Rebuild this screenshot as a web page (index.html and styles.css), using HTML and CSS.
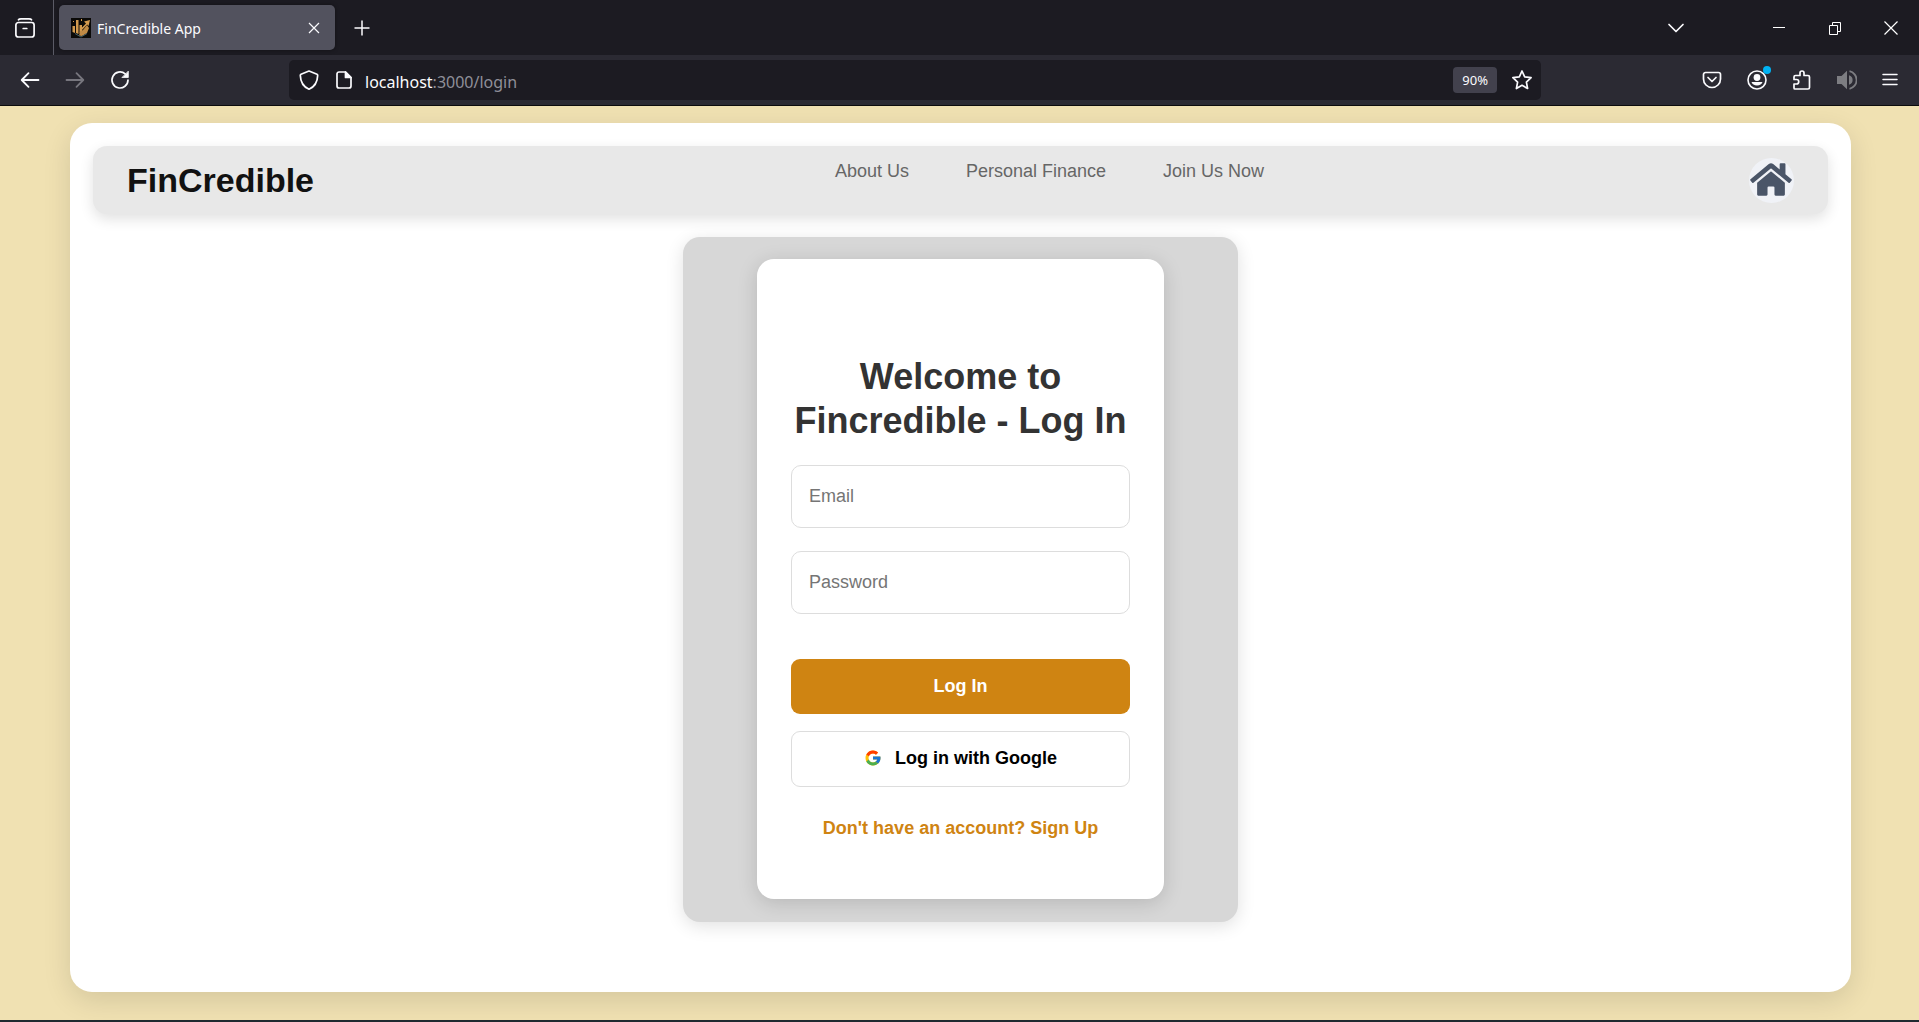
FILE: index.html
```html
<!DOCTYPE html>
<html lang="en">
<head>
<meta charset="utf-8">
<meta name="viewport" content="width=device-width, initial-scale=1">
<title>FinCredible App</title>
<link rel="stylesheet" href="styles.css">
</head>
<body>
<div class="browser">
  <div class="tab-bar">
    <div class="tab-side">
      <button class="icon-button" type="button" aria-label="Recent browsing">
        <svg width="20" height="20" viewBox="0 0 20 20" fill="none" stroke="#fbfbfe" stroke-width="1.700" stroke-linecap="round"><path d="M3.500 1.800C4 1 5 .9 6 .9h8c1 0 2 .1 2.500.9"/><rect x=".9" y="4.500" width="18.200" height="14.500" rx="2.500"/><path d="M8.200 10.500h3.600"/></svg>
      </button>
    </div>
    <div class="tab">
      <svg class="tab-logo" width="20" height="20" viewBox="0 0 20 20"><rect width="20" height="20" fill="#0b0a08"/><g fill="#d39a4e"><path d="M1.500 8h2.500v7l-2.500-1zM5 2h2.500v14L5 15zM8.500 7h2.500v8H8.500z"/><path d="M13 3.500l6-1.500-1.500 6-1.300-1.500L11 12l-1-1.500 5-5z"/><path d="M8 17.500l1-4 3-1.500 4-5 2 3-2 5-5 3z" fill="#c08a45"/><path d="M2 3h1v1H2zM10 1h1v2h-1z"/></g><path d="M4 15.500l6 3.500 6-3.500" stroke="#466068" fill="none"/></svg>
      <span class="tab-title">FinCredible App</span>
      <button class="icon-button tab-close" type="button" aria-label="Close tab">
        <svg width="12" height="12" viewBox="0 0 12 12" stroke="#fbfbfe" stroke-width="1.200"><path d="M1 1l10 10M11 1L1 11"/></svg>
      </button>
    </div>
    <button class="icon-button new-tab" type="button" aria-label="New tab">
      <svg width="16" height="16" viewBox="0 0 16 16" stroke="#fbfbfe" stroke-width="1.500"><path d="M8 .5v15M.5 8h15"/></svg>
    </button>
    <div class="window-controls">
      <button class="icon-button list-tabs" type="button" aria-label="List all tabs">
        <svg width="18" height="18" viewBox="0 0 18 18" fill="none" stroke="#fbfbfe" stroke-width="1.700" stroke-linecap="round" stroke-linejoin="round"><path d="M2 5.500l7 7 7-7"/></svg>
      </button>
      <button class="icon-button window-button" type="button" aria-label="Minimize">
        <svg width="12" height="14" viewBox="0 0 12 14" stroke="#fff"><path d="M0 6.500h12"/></svg>
      </button>
      <button class="icon-button window-button" type="button" aria-label="Restore">
        <svg width="14" height="14" viewBox="0 0 14 14" fill="none" stroke="#fff"><path d="M1.500 4.500h8v9h-8zM4.500 4.500v-3h8v9h-3"/></svg>
      </button>
      <button class="icon-button window-button" type="button" aria-label="Close window">
        <svg width="14" height="14" viewBox="0 0 14 14" stroke="#fff" stroke-width="1.200"><path d="M.5.5l13 13M13.500.5l-13 13"/></svg>
      </button>
    </div>
  </div>

  <div class="toolbar">
    <div class="history-buttons">
      <button class="icon-button" type="button" aria-label="Back">
        <svg width="20" height="18" viewBox="0 0 20 18" fill="none" stroke="#fbfbfe" stroke-width="1.800" stroke-linecap="round" stroke-linejoin="round"><path d="M18.500 9H2M8.500 2.200L1.700 9l6.800 6.800"/></svg>
      </button>
      <button class="icon-button" type="button" aria-label="Forward" disabled>
        <svg width="20" height="18" viewBox="0 0 20 18" fill="none" stroke="#77767e" stroke-width="1.800" stroke-linecap="round" stroke-linejoin="round"><path d="M1.500 9H18M11.500 2.200L18.300 9l-6.800 6.800"/></svg>
      </button>
      <button class="icon-button" type="button" aria-label="Reload">
        <svg width="20" height="20" viewBox="0 0 20 20" fill="none" stroke="#fbfbfe" stroke-width="1.700" stroke-linecap="round"><path d="M18 10a8 8 0 1 1-2.800-6.100"/><path d="M18.300 1.500v6h-6z" fill="#fbfbfe" stroke-width=".8" stroke-linejoin="round"/></svg>
      </button>
    </div>
    <div class="address-bar">
      <svg width="20" height="20" viewBox="0 0 20 20" fill="none" stroke="#fbfbfe" stroke-width="1.700" stroke-linejoin="round"><path d="M10 1l8 3.200c.6.300.7.600.7 1.200C18.500 11 16.500 16.500 10 19.200 3.500 16.500 1.500 11 1.300 5.400c0-.6.100-.9.700-1.200z"/></svg>
      <svg class="page-icon" width="16" height="18" viewBox="0 0 16 18" fill="none" stroke="#fbfbfe" stroke-width="1.700" stroke-linejoin="round"><path d="M9.500 1H3a2 2 0 0 0-2 2v12a2 2 0 0 0 2 2h10a2 2 0 0 0 2-2V6.500z"/><path d="M9.500 1v5.500H15z" fill="#fbfbfe"/></svg>
      <div class="address" role="textbox" aria-label="Address"><span class="address-host">localhost</span>:3000/login</div>
      <button class="zoom-level" type="button">90%</button>
      <button class="icon-button" type="button" aria-label="Bookmark this page">
        <svg width="22" height="22" viewBox="0 0 22 22" fill="none" stroke="#fbfbfe" stroke-width="1.700" stroke-linejoin="round"><path d="M11 2l2.700 5.900 6.400.8-4.700 4.400 1.200 6.400L11 16.300l-5.600 3.200 1.200-6.400L1.900 8.700l6.400-.8z"/></svg>
      </button>
    </div>
    <div class="tools">
      <button class="icon-button" type="button" aria-label="Save to Pocket">
        <svg width="20" height="20" viewBox="0 0 20 20" fill="none" stroke="#fbfbfe" stroke-width="1.700" stroke-linecap="round" stroke-linejoin="round"><path d="M3.500 2.500h13a2 2 0 0 1 2 2V9a8.500 8.500 0 0 1-17 0V4.500a2 2 0 0 1 2-2z"/><path d="M6 7.500l4 4 4-4"/></svg>
      </button>
      <button class="icon-button account" type="button" aria-label="Account">
        <svg width="20" height="20" viewBox="0 0 20 20" fill="none" stroke="#fbfbfe" stroke-width="1.600"><circle cx="10" cy="10" r="9"/><circle cx="10" cy="7.500" r="3.400" fill="#fbfbfe" stroke="none"/><path d="M4.500 12h11c-.6 2.200-2.800 3.600-5.500 3.600S5.100 14.200 4.500 12z" fill="#fbfbfe" stroke="none"/></svg>
        <span class="account-badge"></span>
      </button>
      <button class="icon-button" type="button" aria-label="Extensions">
        <svg width="20" height="20" viewBox="0 0 20 20" fill="none" stroke="#fbfbfe" stroke-width="1.700" stroke-linejoin="round"><path d="M3 19h13a1.500 1.500 0 0 0 1.500-1.500V7A1.500 1.500 0 0 0 16 5.500h-4V3a2 2 0 0 0-4 0v2.500H3.500A1.500 1.500 0 0 0 2 7v2.500h2.500a2 2 0 0 1 0 4.500H2v4a1 1 0 0 0 1 1z"/></svg>
      </button>
      <button class="icon-button" type="button" aria-label="Sound">
        <svg width="20" height="20" viewBox="0 0 20 20" fill="none" stroke="#7d7d82" stroke-width="1.800"><path d="M0 6h4.500L10 .8v18.400L4.500 14H0z" fill="#7d7d82" stroke="none"/><path d="M12 5.200a5 5 0 0 1 0 9.600z" fill="#7d7d82" stroke="none"/><path d="M12.500 1.200a9 9 0 0 1 0 17.600"/></svg>
      </button>
      <button class="icon-button" type="button" aria-label="Menu">
        <svg width="16" height="16" viewBox="0 0 16 16" stroke="#fbfbfe" stroke-width="1.500" stroke-linecap="round"><path d="M1 2.500h14M1 7.500h14M1 12.500h14"/></svg>
      </button>
    </div>
  </div>
</div>

<div class="page">
  <div class="sheet">
    <header class="site-header">
      <div class="brand">FinCredible</div>
      <nav>
        <ul class="nav-links">
          <li><a href="#about">About Us</a></li>
          <li><a href="#finance">Personal Finance</a></li>
          <li><a href="#join">Join Us Now</a></li>
        </ul>
      </nav>
      <a class="home-link" href="#home" aria-label="Home">
        <svg width="42" height="37" viewBox="0 0 576 512" fill="#4a5568"><path d="M280.370 148.260L96 300.110V464a16 16 0 0 0 16 16l112.060-.29a16 16 0 0 0 15.920-16V368a16 16 0 0 1 16-16h64a16 16 0 0 1 16 16v95.640a16 16 0 0 0 16 16.050L464 480a16 16 0 0 0 16-16V300L295.670 148.260a12.190 12.190 0 0 0-15.300 0zM571.600 251.470L488 182.560V44.050a12 12 0 0 0-12-12h-56a12 12 0 0 0-12 12v72.610L318.470 43a48 48 0 0 0-61 0L4.340 251.470a12 12 0 0 0-1.600 16.900l25.500 31A12 12 0 0 0 45.150 301l235.220-193.740a12.190 12.190 0 0 1 15.300 0L530.900 301a12 12 0 0 0 16.900-1.600l25.500-31a12 12 0 0 0-1.700-16.930z"/></svg>
      </a>
    </header>

    <main class="login-panel">
      <form class="login-card">
        <h1 class="login-title">Welcome to Fincredible - Log In</h1>
        <input class="field" type="email" aria-label="Email" placeholder="Email">
        <input class="field" type="password" aria-label="Password" placeholder="Password">
        <div class="actions">
          <button class="button button-primary" type="submit">Log In</button>
          <button class="button button-google" type="button">
            <svg width="18" height="18" viewBox="0 0 48 48"><path fill="#FFC107" d="M43.611 20.083H42V20H24v8h11.303c-1.649 4.657-6.080 8-11.303 8-6.627 0-12-5.373-12-12s5.373-12 12-12c3.059 0 5.842 1.154 7.961 3.039l5.657-5.657C34.046 6.053 29.268 4 24 4 12.955 4 4 12.955 4 24s8.955 20 20 20 20-8.955 20-20c0-1.341-.138-2.650-.389-3.917z"/><path fill="#FF3D00" d="M6.306 14.691l6.571 4.819C14.655 15.108 18.961 12 24 12c3.059 0 5.842 1.154 7.961 3.039l5.657-5.657C34.046 6.053 29.268 4 24 4 16.318 4 9.656 8.337 6.306 14.691z"/><path fill="#4CAF50" d="M24 44c5.166 0 9.860-1.977 13.409-5.192l-6.190-5.238A11.910 11.910 0 0 1 24 36c-5.202 0-9.619-3.317-11.283-7.946l-6.522 5.025C9.505 39.556 16.227 44 24 44z"/><path fill="#1976D2" d="M43.611 20.083H42V20H24v8h11.303a12.040 12.040 0 0 1-4.087 5.571l6.193 5.238C36.971 39.205 44 34 44 24c0-1.341-.138-2.650-.389-3.917z"/></svg>
            <span>Log in with Google</span>
          </button>
        </div>
        <a class="signup-link" href="#signup">Don't have an account? Sign Up</a>
      </form>
    </main>
  </div>
</div>
</body>
</html>
```
FILE: styles.css
```css
* {
  box-sizing: border-box;
}

body {
  margin: 0;
  min-height: 100vh;
  display: flex;
  flex-direction: column;
  background: #f0e1b2;
  border-bottom: 2px solid #1f2a30;
  font-family: "Liberation Sans", Arial, sans-serif;
  font-size: 18px;
  line-height: 20px;
}

button,
input {
  font: inherit;
}

svg {
  display: block;
  flex: none;
}

/* Browser window */

.browser {
  background: #2b2a33;
  border-bottom: 1px solid #0c0c0d;
  color: #fbfbfe;
  font-family: "Noto Sans", "Segoe UI", sans-serif;
}

.icon-button {
  display: flex;
  align-items: center;
  justify-content: center;
  padding: 0;
  border: 0;
  background: none;
}

.tab-bar {
  display: flex;
  align-items: center;
  height: 55px;
  background: #1c1b22;
}

.tab-side {
  display: flex;
  align-items: center;
  width: 54px;
  height: 100%;
  padding-left: 15px;
  border-right: 1px solid #5b5b66;
}

.tab {
  display: flex;
  align-items: center;
  gap: 6px;
  width: 276px;
  height: 45px;
  margin-left: 5px;
  padding: 0 15px 0 12px;
  border-radius: 5px;
  background: #52525e;
  box-shadow: 0 0 4px rgba(0, 0, 0, 0.4);
}

.tab-title {
  flex: 1;
  padding-top: 2px;
  font-size: 14px;
}

.new-tab {
  width: 54px;
  height: 44px;
}

.window-controls {
  display: flex;
  align-items: center;
  margin-left: auto;
}

.list-tabs {
  width: 46px;
  height: 44px;
  margin-right: 52px;
}

.window-button {
  width: 56px;
  height: 54px;
}

.toolbar {
  display: flex;
  align-items: center;
  height: 50px;
  padding: 0 21px 0 20px;
}

.history-buttons,
.tools {
  display: flex;
  align-items: center;
  gap: 25px;
}

.address-bar {
  display: flex;
  align-items: center;
  flex: 1;
  height: 40px;
  margin: 0 161px 0 159px;
  padding: 0 8px 0 10px;
  border-radius: 5px;
  background: #1c1b22;
}

.page-icon {
  margin: 0 13px 0 17px;
}

.address {
  flex: 1;
  padding-top: 3px;
  color: #8f8f99;
  font-size: 16px;
}

.address-host {
  color: #fbfbfe;
}

.zoom-level {
  height: 26px;
  margin-right: 14px;
  padding: 0 9px;
  border: 0;
  border-radius: 4px;
  background: #42414d;
  color: #fbfbfe;
  font-size: 13px;
}

.account {
  position: relative;
}

.account-badge {
  position: absolute;
  top: -4px;
  right: -4px;
  width: 8px;
  height: 8px;
  border-radius: 50%;
  background: #00b3f4;
}

/* Web page */

.page {
  display: flex;
  flex: 1;
  padding: 17px 68px 28px 70px;
}

.sheet {
  flex: 1;
  padding: 23px;
  border-radius: 22px;
  background: #fff;
  box-shadow: 0 8px 28px rgba(0, 0, 0, 0.12);
}

.site-header {
  display: flex;
  align-items: center;
  justify-content: space-between;
  height: 68px;
  padding: 0 34px;
  border-radius: 14px;
  background: #e8e8e8;
  box-shadow: 0 5px 14px rgba(0, 0, 0, 0.12);
}

.brand {
  color: #111;
  font-size: 34px;
  font-weight: bold;
  line-height: 40px;
}

.nav-links {
  display: flex;
  gap: 57px;
  margin: 0 0 18px;
  padding: 0 0 0 36px;
  list-style: none;
}

.nav-links a {
  color: #666;
  text-decoration: none;
}

.home-link {
  display: flex;
  align-items: center;
  justify-content: center;
  width: 45px;
  height: 45px;
  padding-bottom: 2px;
  border-radius: 50%;
  background: #f0f2f7;
}

.login-panel {
  max-width: 555px;
  margin: 23px auto 0;
  padding: 22px 74px 23px;
  border-radius: 17px;
  background: #d7d7d7;
  box-shadow: 0 4px 18px rgba(0, 0, 0, 0.12);
}

.login-card {
  display: flex;
  flex-direction: column;
  align-items: stretch;
  padding: 96px 34px 61px;
  border-radius: 17px;
  background: #fff;
  box-shadow: 0 4px 20px rgba(0, 0, 0, 0.15);
}

.login-title {
  margin: 0 0 22px;
  color: #333;
  font-size: 36px;
  line-height: 44px;
  text-align: center;
}

.field {
  width: 100%;
  height: 63px;
  margin-bottom: 23px;
  padding: 0 17px;
  border: 1px solid #ddd;
  border-radius: 10px;
  background: #fff;
  color: #333;
}

.field::placeholder {
  color: #757575;
}

.actions {
  display: grid;
  gap: 17px;
  margin: 22px 0 31px;
}

.button {
  display: flex;
  align-items: center;
  justify-content: center;
  gap: 13px;
  height: 55px;
  padding: 0 0 2px;
  border: 0;
  border-radius: 9px;
  font-weight: bold;
}

.button-primary {
  background: #cf8412;
  color: #fff;
}

.button-google {
  height: 56px;
  border: 1px solid #ddd;
  background: #fff;
  color: #000;
}

.signup-link {
  color: #cf8412;
  font-weight: bold;
  text-align: center;
  text-decoration: none;
}
```
